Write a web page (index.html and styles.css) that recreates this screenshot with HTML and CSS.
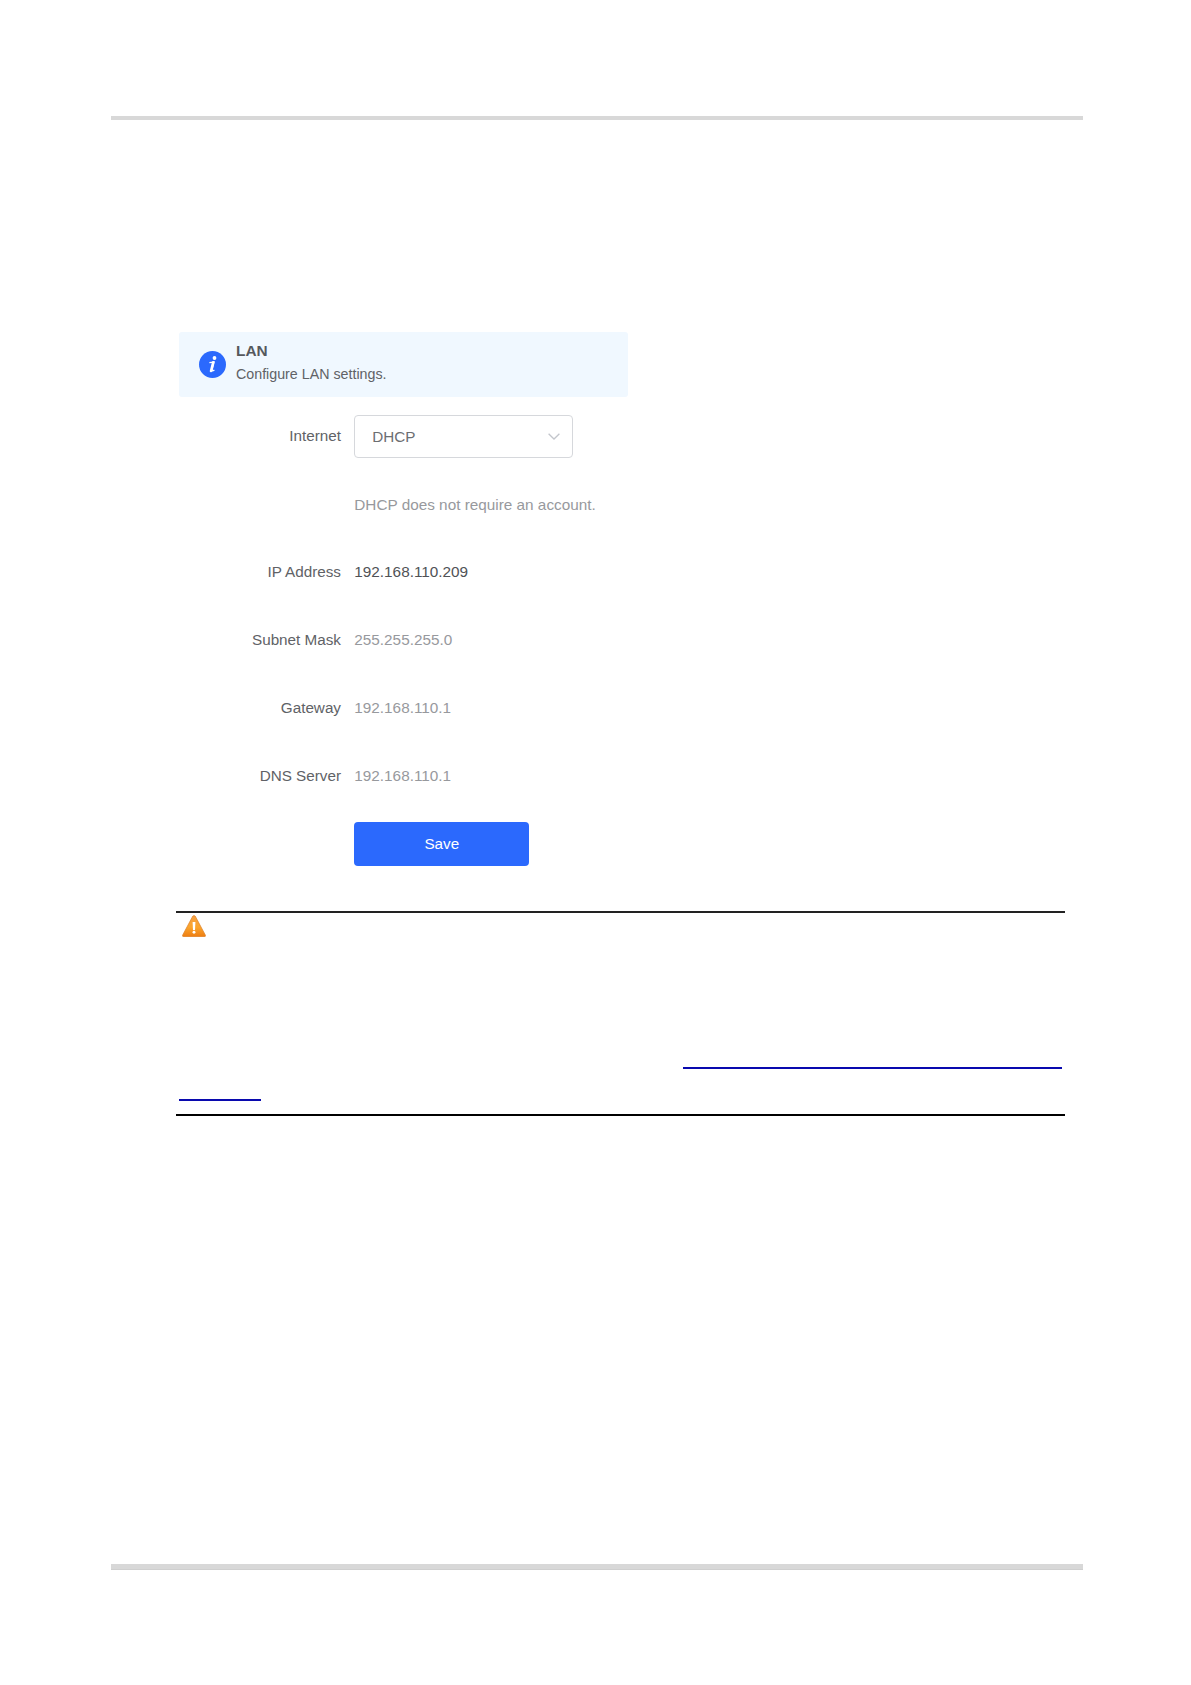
FILE: index.html
```html
<!DOCTYPE html>
<html lang="en">
<head>
<meta charset="utf-8">
<title>LAN</title>
<link rel="stylesheet" href="styles.css">
</head>
<body>
<main class="page">
  <hr class="page-rule">
  <section class="panel">
    <header class="banner">
      <svg class="info-icon" viewBox="0 0 27 27" aria-hidden="true">
        <circle cx="13.5" cy="13.5" r="13.5" fill="#2b69fd"/>
        <circle cx="15.5" cy="7" r="1.9" fill="#fff"/>
        <path d="M10.4 11.7 L15.1 11 L13 19.4 Q12.8 20.5 15.4 19.2" fill="none" stroke="#fff" stroke-width="1.3"/>
        <path d="M14.2 11.2 L12 20" fill="none" stroke="#fff" stroke-width="2.5" stroke-linecap="round"/>
      </svg>
      <div>
        <h1 class="banner-title">LAN</h1>
        <p class="banner-text">Configure LAN settings.</p>
      </div>
    </header>
    <form class="form">
      <div class="row">
        <span class="label">Internet</span>
        <div class="select">
          <span>DHCP</span>
          <svg class="chevron" viewBox="0 0 12 7" aria-hidden="true"><path d="M.6 .8 L6 6 L11.4 .8" fill="none" stroke="#c3c6cc" stroke-width="1.3"/></svg>
        </div>
      </div>
      <div class="row"><span class="label"></span><span class="value value-hint">DHCP does not require an account.</span></div>
      <div class="row"><span class="label">IP Address</span><span class="value value-strong">192.168.110.209</span></div>
      <div class="row"><span class="label">Subnet Mask</span><span class="value">255.255.255.0</span></div>
      <div class="row"><span class="label">Gateway</span><span class="value">192.168.110.1</span></div>
      <div class="row"><span class="label">DNS Server</span><span class="value">192.168.110.1</span></div>
      <div class="row"><span class="label"></span><button class="save" type="button">Save</button></div>
    </form>
  </section>
  <aside class="caution">
    <svg class="warning-icon" viewBox="0 0 24 22" aria-hidden="true">
      <defs><linearGradient id="amber" x2="0" y2="1"><stop stop-color="#f5a044"/><stop offset=".55" stop-color="#fba52c"/><stop offset="1" stop-color="#ed7d12"/></linearGradient></defs>
      <path d="M10.7 1.3 Q12 -.3 13.3 1.3 L23.3 20 Q23.9 21.7 22.3 21.7 H1.7 Q.1 21.7 .7 20 Z" fill="url(#amber)" stroke="#dd8128" stroke-width=".7"/>
      <path d="M10.6 7 H13.4 L13 14.9 H11 Z" fill="#fff"/>
      <circle cx="12" cy="17.3" r="1.45" fill="#fff"/>
    </svg>
    <div class="link-line link-line-first"></div>
    <div class="link-line link-line-second"></div>
  </aside>
  <hr class="page-rule page-rule-bottom">
</main>
</body>
</html>
```
FILE: styles.css
```css
* { box-sizing: border-box; }

body {
  margin: 0;
  background: #fff;
  font-family: "Liberation Sans", Arial, sans-serif;
  font-size: 15.25px;
  color: #606266;
}

.page {
  display: flex;
  flex-direction: column;
  height: 1685px;
  padding: 116px 108px 115px 111px;
}

.page-rule {
  width: 100%;
  height: 4px;
  margin: 0;
  border: 0;
  background: #d8d8d8;
}

.page-rule-bottom {
  height: 6px;
  margin-top: auto;
  border-bottom: 1px solid #cfcfcf;
}

.panel {
  width: 449px;
  margin: 212px 0 0 68px;
}

.banner {
  display: flex;
  align-items: center;
  gap: 10.5px;
  height: 65px;
  padding: 0 19px 0 19.5px;
  border-radius: 3px;
  background: #f0f8ff;
}

.info-icon {
  width: 27px;
  height: 27px;
  flex: none;
}

.banner-title {
  margin: -5px 0 0;
  font-size: 15.4px;
  line-height: 23px;
  color: #55585d;
}

.banner-text {
  margin: 0;
  font-size: 14.25px;
  line-height: 24px;
}

.form { padding-top: 5px; }

.row {
  display: flex;
  align-items: center;
  gap: 13.3px;
  height: 68px;
  line-height: 17px;
}

.label {
  width: 162px;
  padding-bottom: 1px;
  text-align: right;
}

.value {
  padding-bottom: 1px;
  font-size: 15.32px;
  color: #97999d;
  white-space: nowrap;
}

.value-hint { padding-bottom: 0; }

.value-strong { color: #505256; }

.select {
  display: flex;
  align-items: center;
  justify-content: space-between;
  width: 219px;
  height: 43px;
  margin-top: 1px;
  padding: 0 12px 0 17px;
  border: 1px solid #d6d8dc;
  border-radius: 4px;
  color: #6c6e72;
}

.chevron {
  width: 12px;
  height: 7px;
}

.save {
  width: 175px;
  height: 44px;
  padding: 0 0 1px;
  border: 0;
  border-radius: 4px;
  background: #2b69fd;
  color: #fff;
  font: inherit;
}

.caution {
  display: flex;
  flex-direction: column;
  width: 889px;
  height: 205px;
  margin: 33px 0 0 65px;
  padding: 2px 3px 13px;
  border-top: 2px solid #222;
  border-bottom: 2px solid #000;
}

.warning-icon {
  width: 24px;
  height: 22px;
  margin-left: 3px;
}

.link-line {
  height: 2px;
  background: #0909ae;
}

.link-line-first {
  width: 379px;
  margin: auto 0 0 auto;
}

.link-line-second {
  width: 82px;
  margin-top: 30px;
}
```
